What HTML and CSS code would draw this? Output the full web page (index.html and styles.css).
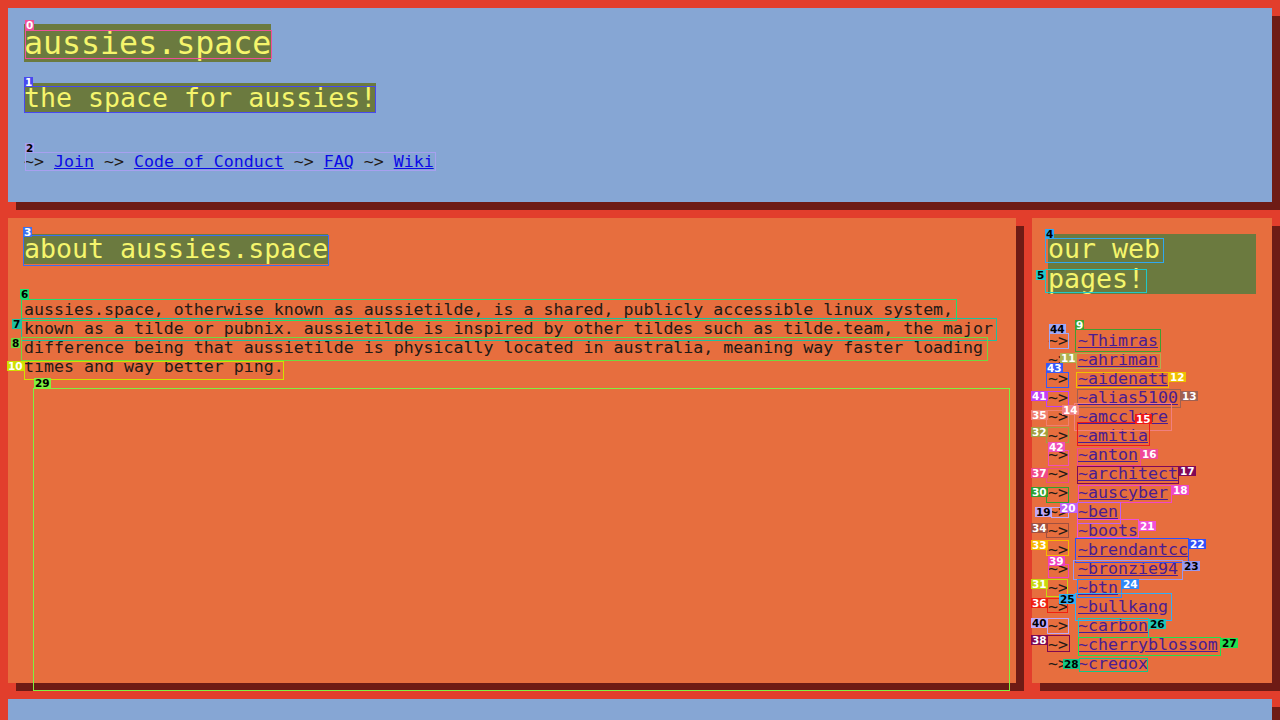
FILE: index.html
```html
<!DOCTYPE html>
<html lang="en">
<head>
<meta charset="utf-8">
<title>aussies.space</title>
<link rel="stylesheet" href="styles.css">
</head>
<body>
<div class="page">
  <header class="panel top">
    <h1 class="title">aussies.space</h1>
    <h2 class="heading sub">the space for aussies!</h2>
    <nav class="nav">~&gt; <a href="#">Join</a> ~&gt; <a href="#">Code of Conduct</a> ~&gt; <a href="#">FAQ</a> ~&gt; <a href="#">Wiki</a></nav>
  </header>
  <main class="panel main">
    <h2 class="heading">about aussies.space</h2>
    <p class="about">aussies.space, otherwise known as aussietilde, is a shared, publicly accessible linux system, known as a tilde or pubnix. aussietilde is inspired by other tildes such as tilde.team, the major difference being that aussietilde is physically located in australia, meaning way faster loading times and way better ping.</p>
    <div class="embed"></div>
  </main>
  <aside class="panel side">
    <h2 class="heading">our web pages!</h2>
    <ul class="members">
      <li><span class="arrow">~&gt;</span> <a href="#">~Thimras</a></li>
      <li><span class="arrow">~&gt;</span> <a href="#">~ahriman</a></li>
      <li><span class="arrow">~&gt;</span> <a href="#">~aidenatt</a></li>
      <li><span class="arrow">~&gt;</span> <a href="#">~alias5100</a></li>
      <li><span class="arrow">~&gt;</span> <a href="#">~amcclure</a></li>
      <li><span class="arrow">~&gt;</span> <a href="#">~amitia</a></li>
      <li><span class="arrow">~&gt;</span> <a href="#">~anton</a></li>
      <li><span class="arrow">~&gt;</span> <a href="#">~architect</a></li>
      <li><span class="arrow">~&gt;</span> <a href="#">~auscyber</a></li>
      <li><span class="arrow">~&gt;</span> <a href="#">~ben</a></li>
      <li><span class="arrow">~&gt;</span> <a href="#">~boots</a></li>
      <li><span class="arrow">~&gt;</span> <a href="#">~brendantcc</a></li>
      <li><span class="arrow">~&gt;</span> <a href="#">~bronzie94</a></li>
      <li><span class="arrow">~&gt;</span> <a href="#">~btn</a></li>
      <li><span class="arrow">~&gt;</span> <a href="#">~bullkang</a></li>
      <li><span class="arrow">~&gt;</span> <a href="#">~carbon</a></li>
      <li><span class="arrow">~&gt;</span> <a href="#">~cherryblossom</a></li>
      <li><span class="arrow">~&gt;</span> <a href="#">~cregox</a></li>
    </ul>
  </aside>
  <footer class="panel foot"></footer>
</div>
<div class="marks" id="marks"></div>
<script src="script.js"></script>
</body>
</html>
```

FILE: styles.css
```css
html, body {
  margin: 0;
  padding: 0;
}
body {
  background: #e23e2c;
  font-family: "DejaVu Sans Mono", monospace;
  font-size: 16.6px;
  line-height: 19px;
  color: #221a16;
  padding: 8px;
  overflow: hidden;
  height: 720px;
  box-sizing: border-box;
}
.page {
  display: grid;
  grid-template-columns: 1008px 240px;
  grid-template-rows: 194px 465px 100px;
  gap: 16px;
}
.panel {
  box-shadow: 8px 8px 0 #6e1b15;
  padding: 16px;
  box-sizing: border-box;
}
.top, .foot {
  grid-column: 1 / -1;
  background: #86a6d4;
}
.main, .side {
  background: #e76e3e;
}
.title {
  margin: 0 0 21px;
  width: fit-content;
  font-size: 31.6px;
  line-height: 38px;
  font-weight: normal;
  background: #6b7a3f;
  color: #f5f56c;
}
.heading {
  margin: 0;
  width: fit-content;
  font-size: 26.6px;
  line-height: 30px;
  font-weight: normal;
  background: #6b7a3f;
  color: #f5f56c;
}
.sub {
  margin-bottom: 39px;
}
.nav a {
  color: #0a0ae6;
}
.about {
  margin: 36px 0 0;
}
.embed {
  margin: 12px 0 0 9px;
  width: 977px;
  height: 303px;
}
.members {
  list-style: none;
  margin: 37px 0 0;
  padding: 0;
  height: 338px;
  overflow: hidden;
}
.members a {
  color: #4a1c92;
}
.marks {
  position: absolute;
  left: 0;
  top: 0;
  width: 1280px;
  height: 720px;
  pointer-events: none;
}
.mark-box {
  position: absolute;
  box-sizing: border-box;
  border: 1px solid;
}
.mark-chip {
  position: absolute;
  font-family: "DejaVu Sans", sans-serif;
  font-weight: bold;
  font-size: 10.5px;
  line-height: 10px;
  height: 10px;
  padding: 0 1px;
}
```

FILE: script.js
```js
const marks = [
  [0,'#f0509a','#fff',25,30,272,59,25,20],
  [1,'#4848f0','#fff',24,86,376,113,24,77],
  [2,'#a8a0f0','#000',25,152,436,171,25,143],
  [3,'#3a70f0','#fff',23,235,329,266,23,227],
  [4,'#30a8f0','#000',1045,238,1164,263,1045,229],
  [5,'#20c8c8','#000',1045,269,1147,293,1036,270],
  [6,'#20e070','#000',21,299,957,321,20,289],
  [7,'#20c0a0','#000',21,318,997,341,12,319],
  [8,'#70d840','#000',21,337,988,361,11,338],
  [9,'#40a030','#fff',1075,329,1161,352,1075,320],
  [10,'#d0e000','#fff',24,361,284,380,7,361],
  [11,'#b0b050','#fff',1076,353,1161,369,1060,353],
  [12,'#f0c000','#fff',1076,372,1169,388,1169,372],
  [13,'#a06050','#fff',1077,389,1181,408,1181,391],
  [14,'#f08080','#fff',1074,403,1172,431,1062,405],
  [15,'#f01818','#fff',1077,422,1150,446,1135,414],
  [16,'#f04898','#fff',1077,448,1141,466,1141,449],
  [17,'#800858','#fff',1077,466,1179,484,1179,466],
  [18,'#f048c8','#fff',1078,485,1172,503,1172,485],
  [19,'#c0a8f8','#000',1051,507,1069,518,1035,507],
  [20,'#c060f8','#fff',1077,502,1121,524,1060,503],
  [21,'#f050d8','#fff',1077,519,1139,538,1139,521],
  [22,'#3050f8','#fff',1075,538,1189,563,1189,539],
  [23,'#9898f0','#000',1073,560,1183,580,1183,561],
  [24,'#3088f8','#fff',1077,579,1122,598,1122,579],
  [25,'#30b0f8','#000',1075,593,1172,621,1059,594],
  [26,'#20c8b8','#000',1078,618,1149,638,1149,619],
  [27,'#20e050','#000',1078,637,1221,656,1221,638],
  [28,'#10c888','#000',1079,658,1148,672,1063,659],
  [29,'#80f040','#000',33,388,1010,691,34,378],
  [30,'#30a030','#fff',1046,487,1069,503,1031,487],
  [31,'#c8d810','#fff',1046,579,1068,597,1031,579],
  [32,'#a0a040','#fff',1046,427,1069,443,1031,427],
  [33,'#f8b800','#fff',1046,540,1069,556,1031,540],
  [34,'#a05040','#fff',1046,523,1069,538,1031,523],
  [35,'#f08070','#fff',1046,410,1069,426,1031,410],
  [36,'#f02010','#fff',1047,598,1068,613,1031,598],
  [37,'#f04888','#fff',1046,468,1069,483,1031,468],
  [38,'#800850','#fff',1047,635,1070,652,1031,635],
  [39,'#f040c0','#fff',1048,564,1069,578,1048,556],
  [40,'#c0a8f8','#000',1047,618,1069,634,1031,618],
  [41,'#c040f8','#fff',1046,391,1069,407,1031,391],
  [42,'#f050b8','#fff',1048,450,1069,466,1048,442],
  [43,'#3858f8','#fff',1046,372,1069,388,1046,363],
  [44,'#a0a8f8','#000',1049,333,1069,349,1049,324]
];
const layer = document.getElementById('marks');
for (const [n, c, t, l, tp, r, b, cl, ct] of marks) {
  const box = document.createElement('div');
  box.className = 'mark-box';
  box.style.left = l + 'px';
  box.style.top = tp + 'px';
  box.style.width = (r - l) + 'px';
  box.style.height = (b - tp) + 'px';
  box.style.borderColor = c;
  layer.appendChild(box);
}
for (const [n, c, t, l, tp, r, b, cl, ct] of marks) {
  const chip = document.createElement('span');
  chip.className = 'mark-chip';
  chip.textContent = n;
  chip.style.left = cl + 'px';
  chip.style.top = ct + 'px';
  chip.style.background = c;
  chip.style.color = t;
  layer.appendChild(chip);
}
```
